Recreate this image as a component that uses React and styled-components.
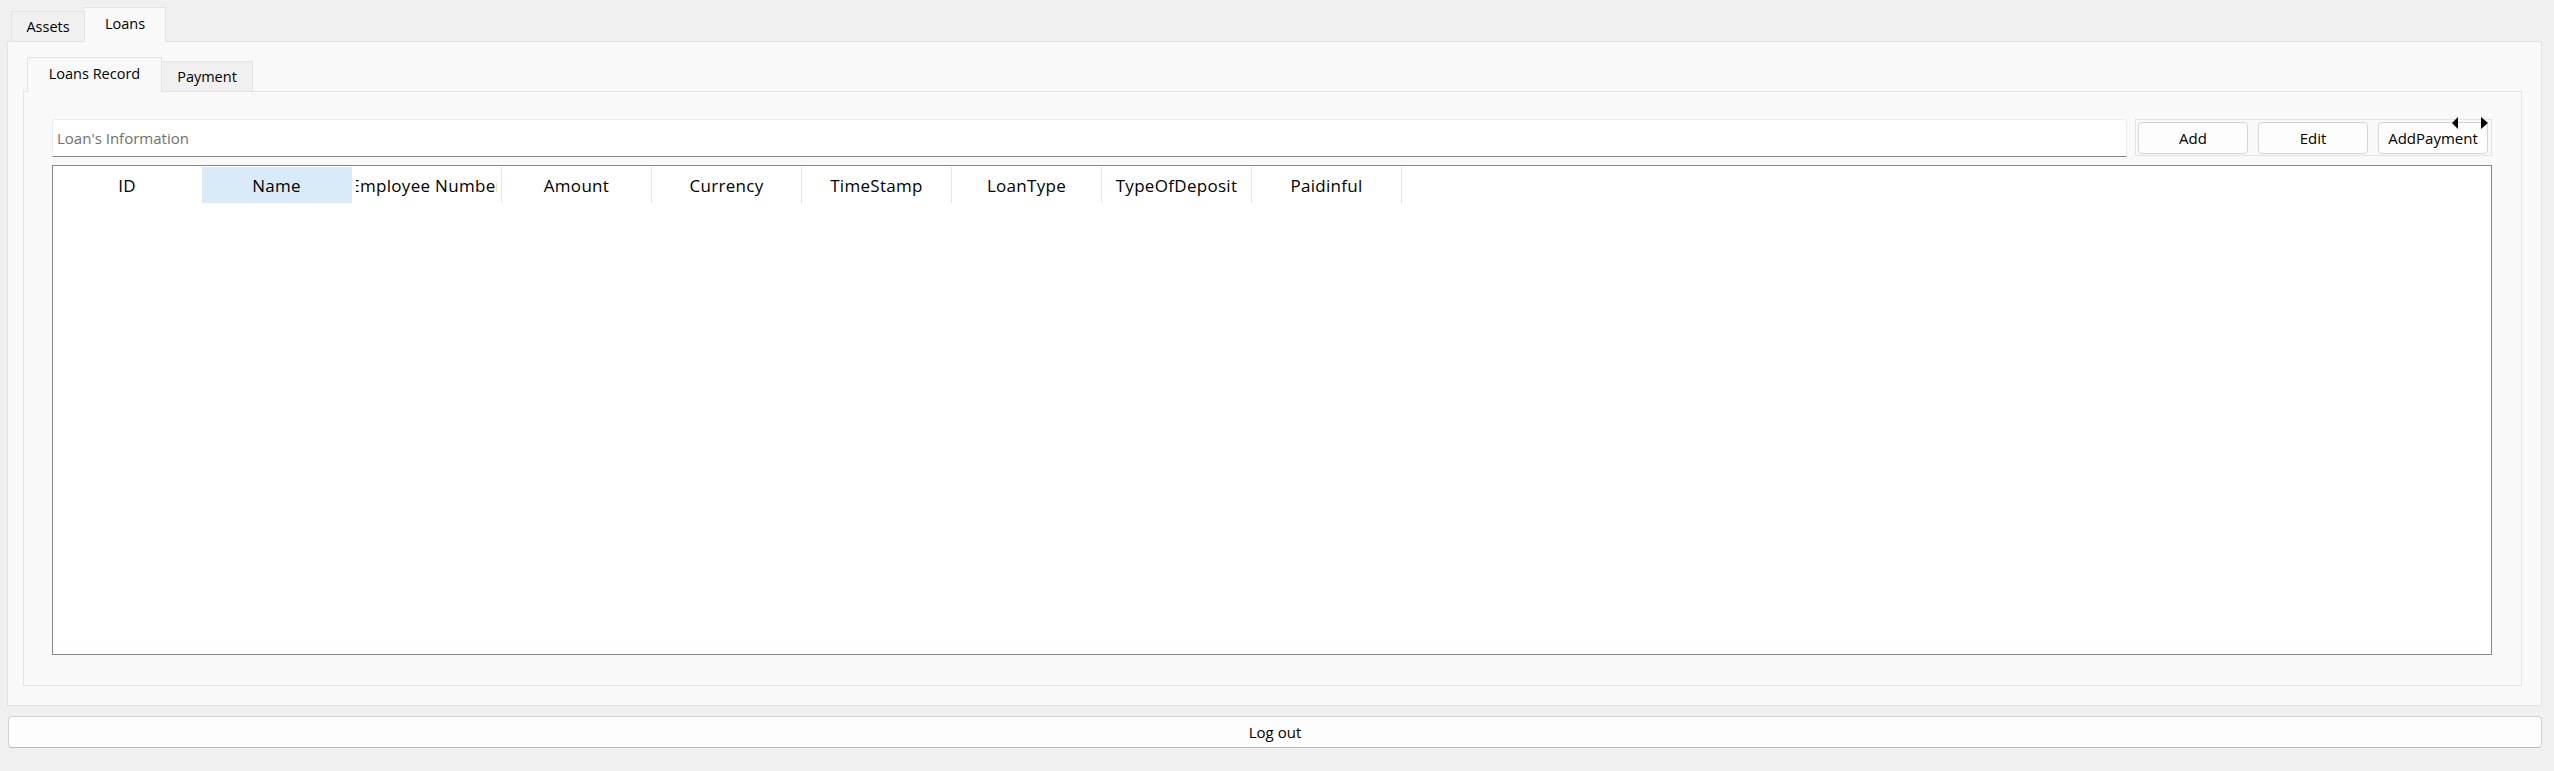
import React, {useState} from 'react'
import styled, {createGlobalStyle, css} from 'styled-components'

const GlobalStyle = createGlobalStyle`
  html, body {
    margin: 0;
    background: #f0f0f0;
    font-family: 'Open Sans', 'Noto Sans', 'Liberation Sans', sans-serif;
    color: #000;
  }
`

const columns = [
  'ID',
  'Name',
  'Employee Number',
  'Amount',
  'Currency',
  'TimeStamp',
  'LoanType',
  'TypeOfDeposit',
  'Paidinful',
]

export default function App() {
  const [outerTab, setOuterTab] = useState('Loans')
  const [innerTab, setInnerTab] = useState('Loans Record')

  return (
    <>
      <GlobalStyle />
      <Window>
        <TabBar>
          {['Assets', 'Loans'].map((t) => (
            <Tab key={t} active={t === outerTab} width={t === 'Assets' ? 74 : 81} onClick={() => setOuterTab(t)}>
              {t}
            </Tab>
          ))}
        </TabBar>
        <OuterPanel>
          <TabBar>
            {['Loans Record', 'Payment'].map((t) => (
              <Tab key={t} active={t === innerTab} width={t === 'Payment' ? 91 : 135} onClick={() => setInnerTab(t)}>
                {t}
              </Tab>
            ))}
          </TabBar>
          <InnerPanel>
            <Toolbar>
              <SearchInput placeholder="Loan's Information" />
              <ButtonGroup>
                <Button>Add</Button>
                <Button>Edit</Button>
                <Button>AddPayment</Button>
                <ScrollArrow dir="left" />
                <ScrollArrow dir="right" />
              </ButtonGroup>
            </Toolbar>
            <Table>
              <HeaderRow>
                {columns.map((c, i) => (
                  <HeaderCell key={c} first={i === 0} selected={c === 'Name'} divider={i > 1}>
                    <HeaderClip>
                      <span>{c}</span>
                    </HeaderClip>
                  </HeaderCell>
                ))}
              </HeaderRow>
            </Table>
          </InnerPanel>
        </OuterPanel>
        <LogoutButton>Log out</LogoutButton>
      </Window>
    </>
  )
}

const Window = styled.div`
  width: 2554px;
  height: 771px;
  box-sizing: border-box;
  padding: 7px 12px 0 7px;
  display: flex;
  flex-direction: column;
`

const TabBar = styled.div`
  display: flex;
  align-items: flex-end;
  height: 34px;
  padding-left: 4px;
  position: relative;
  z-index: 1;
`

const Tab = styled.div`
  box-sizing: border-box;
  width: ${({width}) => width}px;
  height: 30px;
  display: flex;
  align-items: center;
  justify-content: center;
  font-size: 14.5px;
  background: #f0f0f0;
  border: 1px solid #e3e3e3;
  border-bottom: none;
  cursor: default;

  & + & {
    border-left: none;
  }

  ${({active}) =>
    active &&
    css`
      height: 35px;
      margin-bottom: -1px;
      background: #f9f9f9;
      padding-bottom: 3px;
    `}
`

const OuterPanel = styled.div`
  box-sizing: border-box;
  height: 665px;
  border: 1px solid #e3e3e3;
  background: #f9f9f9;
  padding: 15px 19px 19px 15px;
  display: flex;
  flex-direction: column;
`

const InnerPanel = styled.div`
  flex: 1;
  border: 1px solid #e3e3e3;
  background: #f9f9f9;
  padding: 27px 29px 30px 28px;
  display: flex;
  flex-direction: column;
  gap: 8px;
`

const Toolbar = styled.div`
  display: flex;
  gap: 8px;
  align-items: flex-start;
`

const SearchInput = styled.input`
  flex: 1;
  box-sizing: border-box;
  height: 38px;
  border: 1px solid #ebebeb;
  border-bottom: 1px solid #868686;
  border-radius: 4px 4px 0 0;
  background: #fff;
  padding: 0 4px;
  font-family: inherit;
  font-size: 15px;
  outline: none;

  &::placeholder {
    color: #6f6f6f;
  }
`

const ButtonGroup = styled.div`
  position: relative;
  box-sizing: border-box;
  height: 37px;
  display: flex;
  align-items: center;
  gap: 10px;
  padding: 0 3px 0 2px;
  border: 1px solid #e3e3e3;
`

const Button = styled.button`
  box-sizing: border-box;
  width: 110px;
  height: 32px;
  border: 1px solid #d4d4d4;
  border-radius: 4px;
  background: #fdfdfd;
  font-family: inherit;
  font-size: 15px;
  color: #000;
  padding: 0;
`

const ScrollArrow = styled.span`
  position: absolute;
  top: -3px;
  width: 0;
  height: 0;
  border-top: 6px solid transparent;
  border-bottom: 6px solid transparent;
  ${({dir}) =>
    dir === 'left'
      ? css`
          left: 316px;
          border-right: 6px solid #000;
        `
      : css`
          left: 345px;
          border-left: 7px solid #000;
        `}
`

const Table = styled.div`
  flex: 1;
  background: #fff;
  border: 1px solid #828790;
  padding-top: 1px;
`

const HeaderRow = styled.div`
  display: flex;
  height: 36px;
`

const HeaderCell = styled.div`
  box-sizing: border-box;
  flex: 0 0 ${({first}) => (first ? 149 : 150)}px;
  min-width: 0;
  display: flex;
  padding: 0 4px;
  font-size: 17px;
  letter-spacing: 0.3px;
  background: ${({selected}) => (selected ? '#d9ebf9' : 'transparent')};
  border-right: 1px solid ${({divider}) => (divider ? '#e5e5e5' : 'transparent')};
`

const HeaderClip = styled.div`
  flex: 1;
  min-width: 0;
  display: flex;
  align-items: center;
  justify-content: center;
  overflow: hidden;
  white-space: nowrap;

  > span {
    flex-shrink: 0;
  }
`

const LogoutButton = styled.button`
  margin: 10px 0 0 1px;
  box-sizing: border-box;
  height: 32px;
  border: 1px solid #d0d0d0;
  border-bottom-color: #bababa;
  border-radius: 4px;
  background: #fdfdfd;
  font-family: inherit;
  font-size: 15px;
  color: #000;
`
